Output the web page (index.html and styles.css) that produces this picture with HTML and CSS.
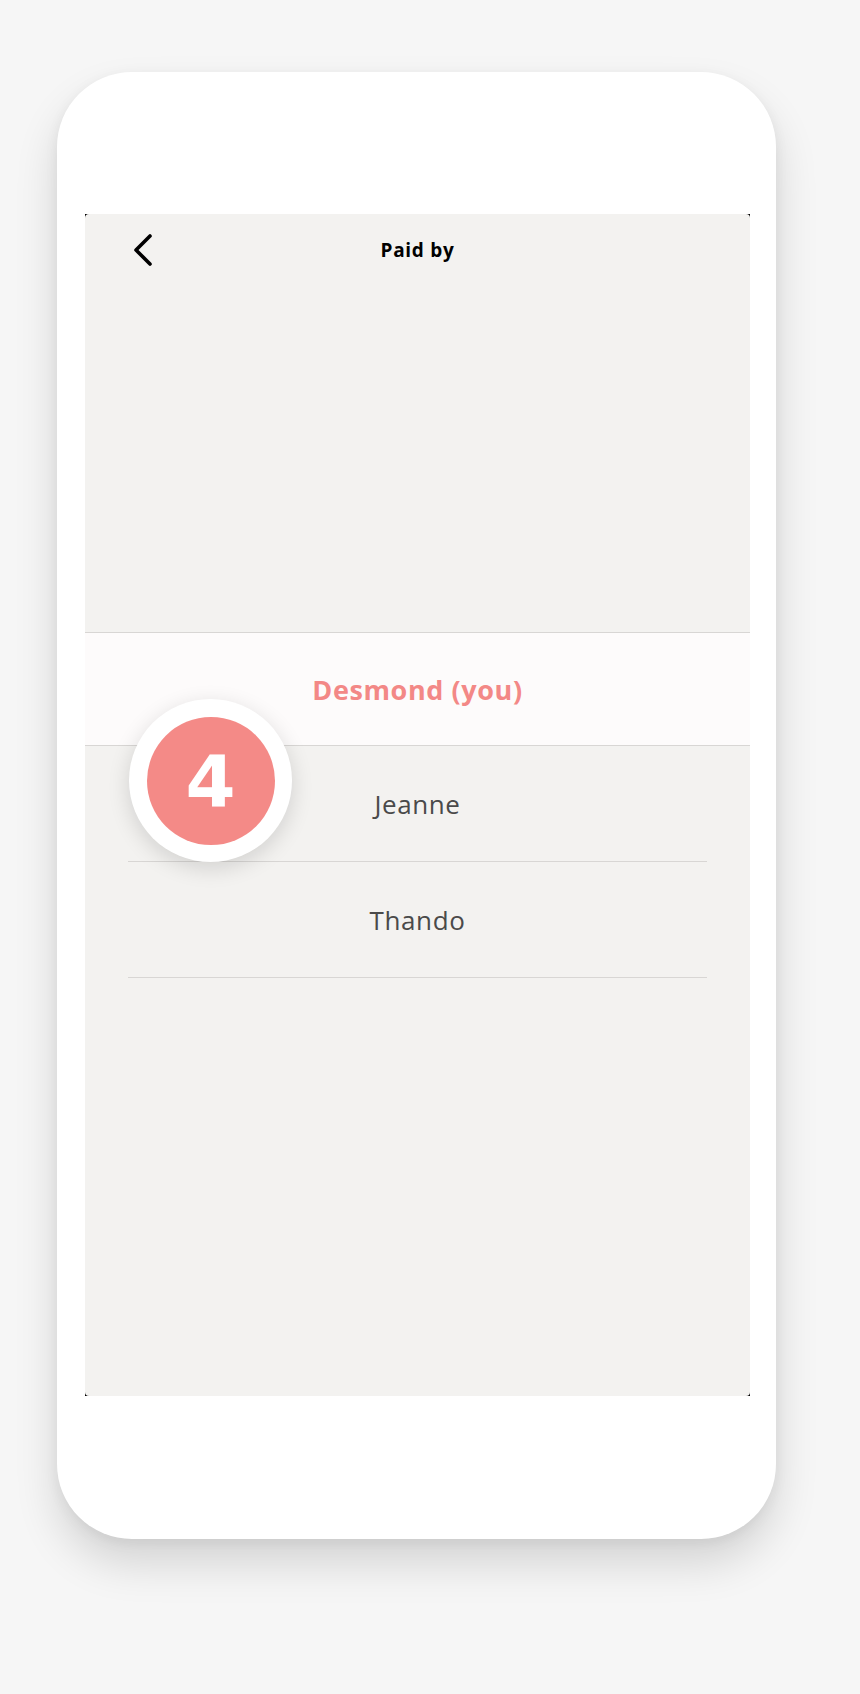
FILE: index.html
```html
<!DOCTYPE html>
<html>
<head>
<meta charset="utf-8">
<link rel="stylesheet" href="styles.css">
</head>
<body>
<div class="phone">
  <div class="screen-frame">
    <div class="screen">
      <div class="header">
        <svg class="back" width="22" height="32" viewBox="0 0 22 32"><path d="M18 2 L4 16 L18 30" fill="none" stroke="#000" stroke-width="3.6" stroke-linecap="round" stroke-linejoin="round"/></svg>
        <div class="title">Paid by</div>
      </div>
      <div class="spacer"></div>
      <div class="list">
        <div class="row selected">Desmond (you)</div>
        <div class="row"><span>Jeanne</span></div>
        <div class="row"><span>Thando</span></div>
      </div>
      <div class="badge"><div class="badge-inner">4</div></div>
    </div>
  </div>
</div>
</body>
</html>
```

FILE: styles.css
```css
html, body {
  margin: 0;
  padding: 0;
  background: #f6f6f6;
}
body {
  width: 860px;
  height: 1694px;
  padding-top: 72px;
  box-sizing: border-box;
  font-family: "Open Sans", "Liberation Sans", sans-serif;
}
.phone {
  margin-left: 57px;
  width: 719px;
  height: 1467px;
  background: #fff;
  border-radius: 75px;
  box-shadow: 0 24px 44px rgba(0,0,0,0.14), 0 4px 14px rgba(0,0,0,0.06);
  padding: 142px 26px 0 28px;
  box-sizing: border-box;
}
.screen-frame {
  width: 665px;
  height: 1182px;
  background: #000;
}
.screen {
  position: relative;
  width: 665px;
  height: 1182px;
  background: #f3f2f0;
  border-radius: 4px;
  display: flex;
  flex-direction: column;
}
.header {
  position: relative;
  height: 72px;
  display: flex;
  align-items: center;
  justify-content: center;
}
.back {
  position: absolute;
  left: 47px;
  top: 20px;
}
.title {
  font-weight: 700;
  font-size: 19px;
  letter-spacing: 0.7px;
  color: #000;
}
.spacer {
  height: 346px;
}
.list {
  display: flex;
  flex-direction: column;
}
.row {
  height: 116px;
  margin: 0 43px;
  border-bottom: 1.5px solid #d8d6d4;
  box-sizing: border-box;
  display: flex;
  align-items: center;
  justify-content: center;
  font-size: 26px;
  color: #4a4a4a;
  letter-spacing: 0.6px;
}
.row.selected {
  margin: 0;
  height: 114px;
  border-top: 1.5px solid #d8d6d4;
  border-bottom: 1.5px solid #d8d6d4;
  background: #fdfbfb;
  color: #f38886;
  font-weight: 700;
  font-size: 27px;
  letter-spacing: 0.6px;
}
.badge {
  position: absolute;
  left: 44px;
  top: 485px;
  width: 163px;
  height: 163px;
  border-radius: 50%;
  background: #fff;
  box-shadow: 0 6px 22px rgba(0,0,0,0.14);
  display: flex;
  align-items: center;
  justify-content: center;
}
.badge-inner {
  width: 128px;
  height: 128px;
  border-radius: 50%;
  background: #f48a87;
  color: #fff;
  font-family: "DejaVu Sans", "Liberation Sans", sans-serif;
  font-weight: 700;
  font-size: 72px;
  line-height: 128px;
  text-align: center;
}
```
